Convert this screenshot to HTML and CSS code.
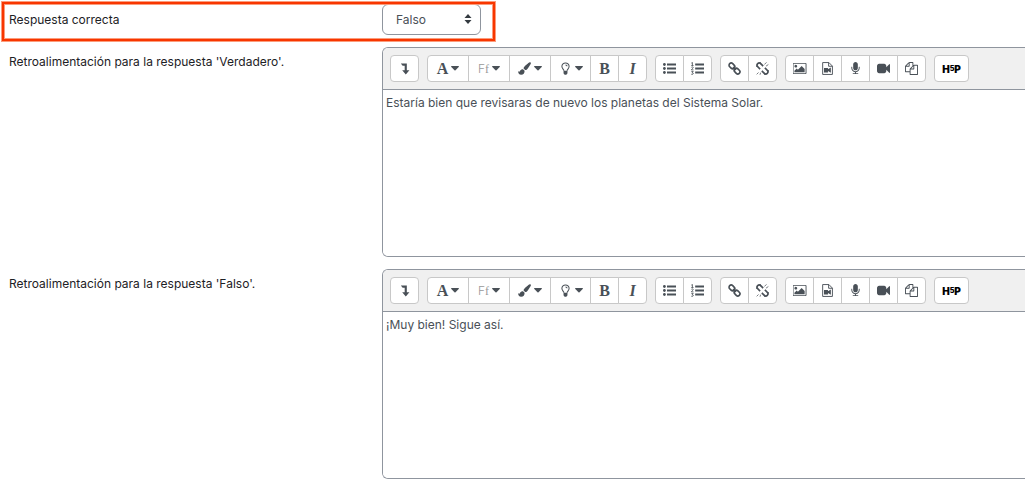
FILE: index.html
```html
<!DOCTYPE html>
<html lang="es">
<head>
<meta charset="utf-8">
<title>Pregunta verdadero/falso</title>
<link rel="stylesheet" href="styles.css">
</head>
<body>
<svg class="sprite" aria-hidden="true">
  <symbol id="i-down" viewBox="0 0 14 14"><path d="M3 1.500h6.500v7.300h2.800L8.400 13.500 4.500 8.800h2.700V4H5z"/></symbol>
  <symbol id="i-caret" viewBox="0 0 8 5"><path d="M.6 0h6.800q.9.200.3.900L4.500 4.300q-.5.400-1 0L.3.900Q-.3.200.6 0z"/></symbol>
  <symbol id="i-brush" viewBox="0 0 14 14"><path d="M12.800.3c.7 0 1.200.5 1.100 1.200-.1.500-3.100 5.400-4.300 6.500-.6.500-1.200.8-1.900.7L6 7c0-.7.300-1.300.8-1.900C7.900 3.900 11.500.9 12 .6zM5.400 7.700l1.700 1.700c.2 2.500-1.300 4.300-3.700 4.400C1.100 13.800.3 12 .1 9.900c.4.200 1 .7 1.400.6.400-.1.500-.6.700-1 .6-1.200 1.600-1.800 3.200-1.800z"/></symbol>
  <symbol id="i-bulb" viewBox="0 0 14 14"><path fill="none" stroke="currentColor" stroke-width="1.100" d="M5.300 9.400C5.200 7.800 3.100 7.200 3.100 4.700A3.800 3.800 0 0 1 7 1a3.800 3.800 0 0 1 3.900 3.700c0 2.500-2.100 3.100-2.200 4.700M7 3.200c.9 0 1.700.5 1.700 1.300"/><path d="M4.900 9.300h4.200v3.200q-.8.400-1.100 1.200H6q-.4-.8-1.100-1.200z"/></symbol>
  <symbol id="i-ul" viewBox="0 0 14 14"><path d="M4.300 1.700H14v2H4.300zM4.300 6H14v2H4.300zM4.300 10.300H14v2H4.300z"/><circle cx="1.500" cy="2.700" r="1.500"/><circle cx="1.500" cy="7" r="1.500"/><circle cx="1.500" cy="11.300" r="1.500"/></symbol>
  <symbol id="i-ol" viewBox="0 0 14 14"><path d="M4.500 1.700H14v2H4.500zM4.500 6H14v2H4.500zM4.500 10.300H14v2H4.500z"/><path fill="none" stroke="currentColor" stroke-width=".9" d="M.4 1.200 1.500.4v3.300M.3 3.800h2.400M.4 5.700q1-.8 1.900-.1c.7.900-1.400 1.600-1.900 2.900h2.300M.4 10.300h2L1.300 11.600q1.300 0 1.200 1T.3 13.200"/></symbol>
  <symbol id="i-link" viewBox="0 0 14 14"><g fill="none" stroke="currentColor" stroke-width="1.800" transform="rotate(45 7 7)"><rect x="-.3" y="4.700" width="6.700" height="4.600" rx="2.300"/><rect x="7.600" y="4.700" width="6.700" height="4.600" rx="2.300"/><path d="M4.800 7h4.400"/></g></symbol>
  <symbol id="i-unlink" viewBox="0 0 14 14"><g fill="none" stroke="currentColor"><g stroke-width="1.800" transform="rotate(45 7 7)"><path d="M5.700 4.700H2a2.300 2.300 0 0 0 0 4.600h3.700M8.300 4.700H12a2.300 2.300 0 0 1 0 4.600H8.300"/></g><path stroke-width=".8" d="M4.700 0v2.500M0 4.700h2.500M9.300 11.500V14M11.500 9.300H14M9 2.700l2.300-2.300M10.800 4.500l2.500-1.800M2.700 11.300.7 13.300M5 11.500l-.7 2.200"/></g></symbol>
  <symbol id="i-image" viewBox="0 0 1920 1792"><path d="M576 576q0 80-56 136t-136 56-136-56-56-136 56-136 136-56 136 56 56 136zm1024 384v448h-1408v-192l320-320 160 160 512-512zm96-704h-1600q-13 0-22.500 9.500t-9.500 22.500v1216q0 13 9.500 22.500t22.500 9.500h1600q13 0 22.500-9.500t9.500-22.500v-1216q0-13-9.500-22.500t-22.500-9.500zm160 32v1216q0 66-47 113t-113 47h-1600q-66 0-113-47t-47-113v-1216q0-66 47-113t113-47h1600q66 0 113 47t47 113z"/></symbol>
  <symbol id="i-media" viewBox="0 0 14 14"><path fill="none" stroke="currentColor" d="M1.800.6h6.700l3.800 3.800v9H1.800zM8.200.6v4h4"/><path d="M3.200 6.400h4.300v1.500L10.600 6v5.500L7.500 9.800v1.600H3.200z"/></symbol>
  <symbol id="i-mic" viewBox="0 0 1792 1792"><path d="M1472 704v128q0 221-147.500 384.500t-364.500 187.500v132h256q26 0 45 19t19 45-19 45-45 19h-640q-26 0-45-19t-19-45 19-45 45-19h256v-132q-217-24-364.500-187.500t-147.500-384.500v-128q0-26 19-45t45-19 45 19 19 45v128q0 185 131.500 316.500t316.500 131.500 316.500-131.500 131.500-316.500v-128q0-26 19-45t45-19 45 19 19 45zm-256-384v512q0 132-94 226t-226 94-226-94-94-226v-512q0-132 94-226t226-94 226 94 94 226z"/></symbol>
  <symbol id="i-video" viewBox="0 0 1792 1792"><path d="M1792 352v1088q0 42-39 59-13 5-25 5-27 0-45-19l-403-403v166q0 119-84.500 203.500t-203.500 84.500h-704q-119 0-203.500-84.500t-84.500-203.500v-704q0-119 84.500-203.500t203.500-84.500h704q119 0 203.500 84.500t84.500 203.500v165l403-402q18-19 45-19 12 0 25 5 39 17 39 59z"/></symbol>
  <symbol id="i-files" viewBox="0 0 1792 1792"><path d="M1696 384q40 0 68 28t28 68v1216q0 40-28 68t-68 28h-960q-40 0-68-28t-28-68v-288h-544q-40 0-68-28t-28-68v-672q0-40 20-88t48-76l408-408q28-28 76-48t88-20h416q40 0 68 28t28 68v328q68-40 128-40h416zm-544 213l-299 299h299v-299zm-640-384l-299 299h299v-299zm196 647l316-316v-416h-384v416q0 40-28 68t-68 28h-416v640h512v-256q0-40 20-88t48-76zm956 804v-1152h-384v416q0 40-28 68t-68 28h-416v640h896z"/></symbol>
</svg>

<form class="form">
  <div class="row row-answer">
    <label class="label" for="answer">Respuesta correcta</label>
    <div class="select-wrap">
      <select class="select" id="answer"><option>Falso</option><option>Verdadero</option></select>
      <svg class="select-arrows" viewBox="0 0 8 10" aria-hidden="true"><path d="M4 0 7.500 4H.5zM4 10 .5 6h7z"/></svg>
    </div>
    <div class="highlight"></div>
  </div>

  <div class="row">
    <label class="label" for="fb-true">Retroalimentación para la respuesta 'Verdadero'.</label>
    <div class="editor">
      <div class="toolbar" role="toolbar">
        <div class="group"><button type="button" class="btn" aria-label="Mostrar más botones"><svg class="icon"><use href="#i-down"/></svg></button></div>
        <div class="group">
          <button type="button" class="btn wide"><span class="glyph">A</span><svg class="caret"><use href="#i-caret"/></svg></button>
          <button type="button" class="btn wide"><span class="font-family">F<span class="serif">f</span></span><svg class="caret"><use href="#i-caret"/></svg></button>
          <button type="button" class="btn wide" aria-label="Color"><svg class="icon"><use href="#i-brush"/></svg><svg class="caret"><use href="#i-caret"/></svg></button>
          <button type="button" class="btn medium" aria-label="Fondo"><svg class="icon"><use href="#i-bulb"/></svg><svg class="caret"><use href="#i-caret"/></svg></button>
          <button type="button" class="btn"><span class="glyph">B</span></button>
          <button type="button" class="btn"><span class="glyph italic">I</span></button>
        </div>
        <div class="group">
          <button type="button" class="btn" aria-label="Lista"><svg class="icon"><use href="#i-ul"/></svg></button>
          <button type="button" class="btn" aria-label="Lista numerada"><svg class="icon"><use href="#i-ol"/></svg></button>
        </div>
        <div class="group">
          <button type="button" class="btn" aria-label="Enlace"><svg class="icon"><use href="#i-link"/></svg></button>
          <button type="button" class="btn" aria-label="Quitar enlace"><svg class="icon"><use href="#i-unlink"/></svg></button>
        </div>
        <div class="group">
          <button type="button" class="btn" aria-label="Imagen"><svg class="icon picture"><use href="#i-image"/></svg></button>
          <button type="button" class="btn" aria-label="Multimedia"><svg class="icon"><use href="#i-media"/></svg></button>
          <button type="button" class="btn" aria-label="Grabar audio"><svg class="icon"><use href="#i-mic"/></svg></button>
          <button type="button" class="btn" aria-label="Grabar vídeo"><svg class="icon"><use href="#i-video"/></svg></button>
          <button type="button" class="btn" aria-label="Archivos"><svg class="icon"><use href="#i-files"/></svg></button>
        </div>
        <div class="group"><button type="button" class="btn h5p">H<span class="five">5</span>P</button></div>
      </div>
      <textarea class="content" id="fb-true">Estaría bien que revisaras de nuevo los planetas del Sistema Solar.</textarea>
    </div>
  </div>

  <div class="row">
    <label class="label" for="fb-false">Retroalimentación para la respuesta 'Falso'.</label>
    <div class="editor">
      <div class="toolbar" role="toolbar">
        <div class="group"><button type="button" class="btn" aria-label="Mostrar más botones"><svg class="icon"><use href="#i-down"/></svg></button></div>
        <div class="group">
          <button type="button" class="btn wide"><span class="glyph">A</span><svg class="caret"><use href="#i-caret"/></svg></button>
          <button type="button" class="btn wide"><span class="font-family">F<span class="serif">f</span></span><svg class="caret"><use href="#i-caret"/></svg></button>
          <button type="button" class="btn wide" aria-label="Color"><svg class="icon"><use href="#i-brush"/></svg><svg class="caret"><use href="#i-caret"/></svg></button>
          <button type="button" class="btn medium" aria-label="Fondo"><svg class="icon"><use href="#i-bulb"/></svg><svg class="caret"><use href="#i-caret"/></svg></button>
          <button type="button" class="btn"><span class="glyph">B</span></button>
          <button type="button" class="btn"><span class="glyph italic">I</span></button>
        </div>
        <div class="group">
          <button type="button" class="btn" aria-label="Lista"><svg class="icon"><use href="#i-ul"/></svg></button>
          <button type="button" class="btn" aria-label="Lista numerada"><svg class="icon"><use href="#i-ol"/></svg></button>
        </div>
        <div class="group">
          <button type="button" class="btn" aria-label="Enlace"><svg class="icon"><use href="#i-link"/></svg></button>
          <button type="button" class="btn" aria-label="Quitar enlace"><svg class="icon"><use href="#i-unlink"/></svg></button>
        </div>
        <div class="group">
          <button type="button" class="btn" aria-label="Imagen"><svg class="icon picture"><use href="#i-image"/></svg></button>
          <button type="button" class="btn" aria-label="Multimedia"><svg class="icon"><use href="#i-media"/></svg></button>
          <button type="button" class="btn" aria-label="Grabar audio"><svg class="icon"><use href="#i-mic"/></svg></button>
          <button type="button" class="btn" aria-label="Grabar vídeo"><svg class="icon"><use href="#i-video"/></svg></button>
          <button type="button" class="btn" aria-label="Archivos"><svg class="icon"><use href="#i-files"/></svg></button>
        </div>
        <div class="group"><button type="button" class="btn h5p">H<span class="five">5</span>P</button></div>
      </div>
      <textarea class="content" id="fb-false">¡Muy bien! Sigue así.</textarea>
    </div>
  </div>
</form>
</body>
</html>
```

FILE: styles.css
```css
* { box-sizing: border-box; }

body {
  margin: 0;
  background: #fff;
  color: #1d2125;
  font: 12px/18px Inter, "Liberation Sans", sans-serif;
}

.sprite { display: none; }

.form {
  display: flex;
  flex-direction: column;
  gap: 12px;
  padding-top: 4px;
}

.row {
  display: grid;
  grid-template-columns: 373px minmax(0, 1fr);
  align-items: start;
  padding-left: 9px;
}

.row-answer {
  position: relative;
  align-items: center;
}

.label { padding-top: 6px; }
.row-answer .label { padding-top: 0; }

.highlight {
  position: absolute;
  top: -2px;
  left: 2px;
  width: 493px;
  height: 39px;
  border: 2px solid #f83600;
  box-shadow: 0 0 0 1px #fb9c7c, inset 0 0 0 1px #fb9c7c;
  pointer-events: none;
}

.select-wrap {
  position: relative;
  justify-self: start;
  display: flex;
}

.select {
  appearance: none;
  width: 99px;
  height: 31px;
  padding: 0 24px 0 13px;
  border: 1px solid #8f959e;
  border-radius: 6px;
  background: #fff;
  color: #495057;
  font: inherit;
}

.select-arrows {
  position: absolute;
  top: 10px;
  right: 9px;
  width: 8px;
  height: 10px;
  fill: #343a40;
  pointer-events: none;
}

.editor {
  display: flex;
  flex-direction: column;
  border: 1px solid #8f959e;
  border-right: 0;
  border-radius: 6px 0 0 6px;
  overflow: hidden;
}

.toolbar {
  display: flex;
  gap: 8px;
  padding: 7px;
  background: #f0f0f0;
  border-bottom: 1px solid #8f959e;
}

.group { display: flex; }

.btn {
  display: flex;
  align-items: center;
  justify-content: center;
  gap: 3px;
  width: 29px;
  height: 27px;
  padding: 0;
  border: 1px solid #c8c8c8;
  background: #fff;
  color: #495057;
  font: inherit;
}

.btn + .btn { margin-left: -1px; }
.btn:first-child { border-top-left-radius: 4px; border-bottom-left-radius: 4px; }
.btn:last-child { border-top-right-radius: 4px; border-bottom-right-radius: 4px; }
.wide { width: 42px; }
.medium { width: 41px; }

.icon { width: 13px; height: 13px; fill: currentColor; }
.picture { width: 14px; }
.caret { width: 8px; height: 5px; fill: currentColor; }

.glyph { font: bold 16px/18px "Liberation Serif", serif; }
.italic { font-style: italic; }
.font-family { color: #999; font-weight: 300; }
.serif { font-family: "Liberation Serif", serif; }

.h5p {
  gap: 0;
  width: 35px;
  color: #000;
  font-size: 10px;
  font-weight: 900;
}

.five { font-size: 7px; }

.content {
  height: 166px;
  padding: 4px 3px;
  border: 0;
  outline: 0;
  resize: none;
  background: #fff;
  color: #495057;
  font: inherit;
}
```
